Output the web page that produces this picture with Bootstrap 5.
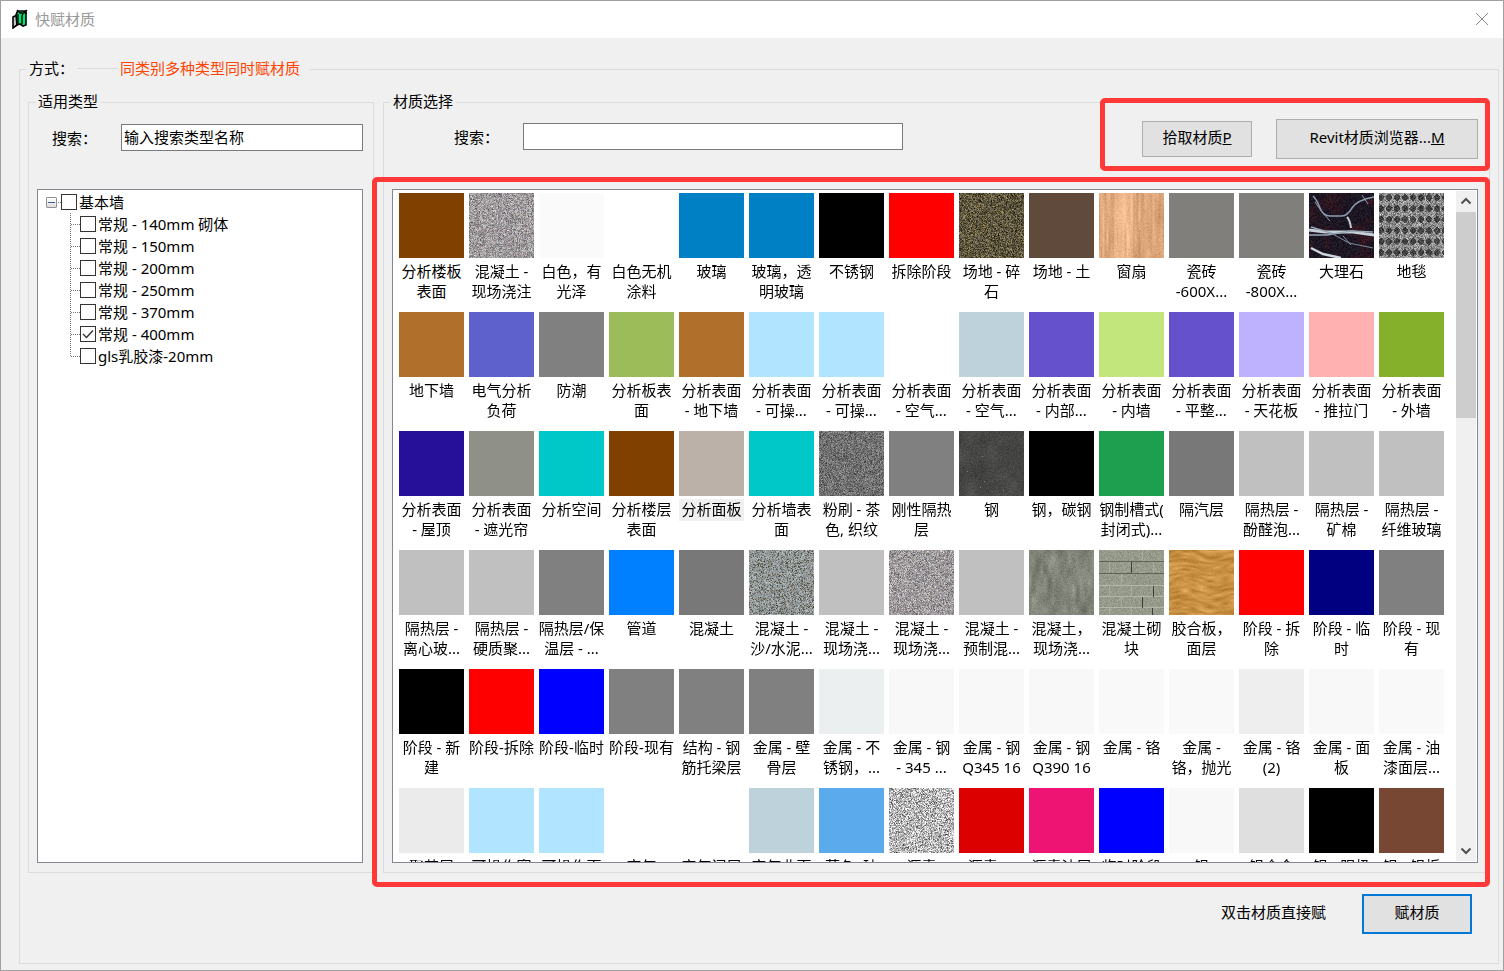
<!DOCTYPE html>
<html lang="zh-CN">
<head>
<meta charset="utf-8">
<meta name="viewport" content="width=device-width, initial-scale=1">
<title>快赋材质</title>
<link rel="stylesheet" href="https://cdn.jsdelivr.net/npm/bootstrap@5.3.0/dist/css/bootstrap.min.css">
<style>
  body { font: 15px/20px "Noto Sans", "Noto Sans CJK SC", sans-serif; color: #000; background: #f0f0f0; }
  .dialog { height: 100vh; min-height: 560px; border: 1px solid #a0a0a0; background: #f0f0f0; }
  .titlebar { height: 37px; padding: 0 14px 2px 10px; background: #fff; color: #999; }
  .titlebar h1 { font-size: 15px; line-height: 20px; font-weight: 400; margin: 0 auto 0 6px; }
  .close-x { width: 14px; height: 14px; background: none; }

  .workspace { padding: 20px 4px 6px 18px; min-height: 0; }
  .group { border: 1px solid #dcdcdc; min-width: 0; min-height: 0; }
  .group > legend { float: none; width: auto; font-size: 15px; line-height: 20px; margin: 0 0 0 -2px; padding: 0 3px 2px; }
  .group-main { padding: 11px 8px 29px; }
  .group-main > legend { padding-right: 9px; }
  .group-sub { padding: 0 11px 9px 8px; }
  .group-types { width: 346px; flex: none; padding-right: 10px; }
  .mode-rule { width: 41px; height: 1px; background: #dcdcdc; margin: 0 2px 0 3px; }
  .mode-note { color: #ff4500; }
  .columns { gap: 9px; min-height: 0; }

  .tool-row { height: 76px; flex: none; }
  .tool-row.types { padding: 11px 0 0 15px; }
  .tool-row.materials { padding: 6px 0 0 62px; }
  .search-label { width: 69px; flex: none; }
  .field { height: 27px; border: 1px solid #7a7a7a; background: #fff; padding: 0 2px 2px; border-radius: 0; outline: 0; min-width: 0; }
  .field-material { width: 380px; }

  .push { background: #e1e1e1; border: 1px solid #adadad; border-radius: 0; color: #000; padding: 0 0 4px; font-size: 15px; line-height: 20px; }
  .push:hover { background: #e5f1fb; border-color: #0078d7; }
  .push-pick { width: 110px; height: 36px; }
  .push-browser { width: 202px; height: 40px; }
  .push-apply { width: 110px; height: 40px; border: 2px solid #0078d7; }
  .push-gap { gap: 24px; }
  .hint { padding-bottom: 4px; }

  .callout { position: absolute; border: 5px solid #ff3838; border-radius: 5px; pointer-events: none; z-index: 2; }
  .callout-tools { inset: -21px -12px -12px -42px; }
  .callout-list { inset: -12px -12px -24px -20px; }

  .sunken { border: 1px solid #828790; background: #fff; min-height: 0; }
  .tree { padding: 1px 0 0 8px; overflow: hidden; }
  .tree ul { list-style: none; margin: 0; padding: 0; }
  .tree-row { height: 22px; display: flex; align-items: center; white-space: nowrap; }
  .tree-row label { padding-left: 2px; }
  .tree .branch { position: relative; margin-left: 24px; }
  .tree .branch::before { content: ""; position: absolute; left: 0; top: 0; bottom: 11px; border-left: 1px dotted #777; }
  .tree .branch .tree-row::before { content: ""; width: 9px; margin-left: 1px; border-top: 1px dotted #777; }
  .stem { width: 3px; margin-left: 1px; border-top: 1px dotted #777; }
  .expander { width: 11px; height: 11px; padding: 0; border: 1px solid #919191; border-radius: 1px; background: linear-gradient(#fff, #ddd); display: flex; align-items: center; justify-content: center; }
  .expander::before { content: ""; width: 7px; height: 1px; background: #3c5a9c; }
  .tick { appearance: none; width: 16px; height: 16px; margin: 0; border: 1px solid #333; background: #fff; border-radius: 0; flex: none; }
  .tick:checked { background: url("data:image/svg+xml,%3Csvg xmlns='http://www.w3.org/2000/svg' viewBox='0 0 14 14'%3E%3Cpath d='M2 7l3.500 3.500L12 3.500' fill='none' stroke='%23333' stroke-width='1.400'/%3E%3C/svg%3E") center/14px 14px no-repeat; }

  .swatches { list-style: none; margin: 0; padding: 3px 0 0 6px; display: grid; grid-template-columns: repeat(auto-fill, 65px); grid-auto-rows: 119px; column-gap: 5px; overflow: hidden; min-height: 0; align-content: start; }
  .swatches li { display: flex; flex-direction: column; align-items: center; }
  .chip { display: block; width: 65px; height: 65px; flex: none; }
  .caption-text { margin-top: 3px; padding: 0 2px 2px; text-align: center; white-space: nowrap; }
  .is-current .caption-text { background: #f0f0f0; }

  .scroller { width: 20px; margin: 1px; background: #f0f0f0; flex: none; }
  .scroller button { height: 20px; border: 0; padding: 0; background: #f0f0f0; display: flex; align-items: center; justify-content: center; }
  .thumb { height: 206px; margin-top: 1px; background: #cdcdcd; }
  .footer-row { padding: 21px 18px 0 0; gap: 36px; flex: none; }
</style>
</head>
<body>
<main class="dialog d-flex flex-column">
  <header class="titlebar d-flex align-items-center flex-shrink-0">
    <svg width="18" height="20" viewBox="0 0 18 20" aria-hidden="true">
      <path d="M2 8l4-2v10l-4 3z" fill="#c8c8c8" stroke="#000" stroke-width="1.600"/>
      <path d="M5 6l1-3 2-1h6l1 1v13l-3 1-3-2-3 1z" fill="#00e676" stroke="#000" stroke-width="1.600"/>
      <path d="M6 1l3 3h4l3-3M7 5v10M12 4l-1 3v8M15 1v4" stroke="#000" stroke-width="1.400" fill="none"/>
    </svg>
    <h1>快赋材质</h1>
    <button type="button" class="close-x border-0 p-0 d-flex" aria-label="关闭">
      <svg width="14" height="14" viewBox="0 0 14 14"><path d="M1 1l12 12M13 1L1 13" stroke="#8a8a8a" fill="none"/></svg>
    </button>
  </header>

  <div class="workspace flex-grow-1 d-flex">
    <fieldset class="group group-main flex-grow-1 d-flex flex-column">
      <legend><span class="d-flex align-items-center"><span>方式：</span><span class="mode-rule"></span><span class="mode-note">同类别多种类型同时赋材质</span></span></legend>

      <div class="columns d-flex flex-grow-1">
        <fieldset class="group group-sub group-types d-flex flex-column">
          <legend>适用类型</legend>
          <div class="tool-row types d-flex align-items-start">
            <label class="search-label pt-1" for="type-search">搜索：</label>
            <input class="field flex-grow-1" id="type-search" type="text" value="输入搜索类型名称">
          </div>
          <div class="sunken tree flex-grow-1">
            <ul>
              <li>
                <div class="tree-row"><button type="button" class="expander" aria-label="折叠"></button><span class="stem"></span><input class="tick" type="checkbox" id="t0"><label for="t0">基本墙</label></div>
                <ul class="branch">
                  <li class="tree-row"><input class="tick" type="checkbox" id="t1"><label for="t1">常规 - 140mm 砌体</label></li>
                  <li class="tree-row"><input class="tick" type="checkbox" id="t2"><label for="t2">常规 - 150mm</label></li>
                  <li class="tree-row"><input class="tick" type="checkbox" id="t3"><label for="t3">常规 - 200mm</label></li>
                  <li class="tree-row"><input class="tick" type="checkbox" id="t4"><label for="t4">常规 - 250mm</label></li>
                  <li class="tree-row"><input class="tick" type="checkbox" id="t5"><label for="t5">常规 - 370mm</label></li>
                  <li class="tree-row"><input class="tick" type="checkbox" id="t6" checked><label for="t6">常规 - 400mm</label></li>
                  <li class="tree-row"><input class="tick" type="checkbox" id="t7"><label for="t7">gls乳胶漆-20mm</label></li>
                </ul>
              </li>
            </ul>
          </div>
        </fieldset>

        <fieldset class="group group-sub flex-grow-1 d-flex flex-column">
          <legend>材质选择</legend>
          <div class="tool-row materials d-flex align-items-start">
            <div class="d-flex me-auto pt-1">
              <label class="search-label pt-1" for="material-search">搜索：</label>
              <input class="field field-material" id="material-search" type="text">
            </div>
            <div class="push-gap position-relative d-flex align-items-center">
              <button type="button" class="btn push push-pick">拾取材质<u>P</u></button>
              <button type="button" class="btn push push-browser">Revit材质浏览器...<u>M</u></button>
              <div class="callout callout-tools"></div>
            </div>
          </div>
          <div class="sunken position-relative flex-grow-1 d-flex border-0">
            <div class="sunken flex-grow-1 d-flex">
              <ul class="swatches flex-grow-1" id="swatches"></ul>
              <div class="scroller d-flex flex-column">
                <button type="button" aria-label="向上滚动"><svg width="12" height="8" viewBox="0 0 12 8"><path d="M1.500 6.500L6 2l4.500 4.500" fill="none" stroke="#505050" stroke-width="2"/></svg></button>
                <div class="thumb"></div>
                <button type="button" class="mt-auto" aria-label="向下滚动"><svg width="12" height="8" viewBox="0 0 12 8"><path d="M1.500 1.500L6 6l4.500-4.500" fill="none" stroke="#505050" stroke-width="2"/></svg></button>
              </div>
            </div>
            <div class="callout callout-list"></div>
          </div>
        </fieldset>
      </div>

      <div class="footer-row d-flex justify-content-end align-items-center">
        <span class="hint">双击材质直接赋</span>
        <button type="button" class="btn push push-apply">赋材质</button>
      </div>
    </fieldset>
  </div>
</main>

<script src="https://cdn.jsdelivr.net/npm/bootstrap@5.3.0/dist/js/bootstrap.bundle.min.js"></script>
<script>
  // Each material: caption (| separates lines) and either a colour or a texture name.
  const materials = [
    ['分析楼板|表面', '#804000'], ['混凝土 -|现场浇注', 'castConcrete'], ['白色，有|光泽', '#fafafa'], ['白色无机|涂料', '#ffffff'], ['玻璃', '#0080c4'],
    ['玻璃，透|明玻璃', '#0080c4'], ['不锈钢', '#000000'], ['拆除阶段', '#ff0000'], ['场地 - 碎|石', 'gravel'], ['场地 - 土', '#604a3c'],
    ['窗扇', 'pine'], ['瓷砖|-600X...', '#807f7c'], ['瓷砖|-800X...', '#807f7c'], ['大理石', 'marble'], ['地毯', 'carpet'],

    ['地下墙', '#b06f2a'], ['电气分析|负荷', '#5e60cc'], ['防潮', '#808080'], ['分析板表|面', '#9cbb59'], ['分析表面|- 地下墙', '#b06f2a'],
    ['分析表面|- 可操...', '#b1e5ff'], ['分析表面|- 可操...', '#b1e5ff'], ['分析表面|- 空气...', '#ffffff'], ['分析表面|- 空气...', '#bdd2db'], ['分析表面|- 内部...', '#6551cb'],
    ['分析表面|- 内墙', '#c2e57c'], ['分析表面|- 平整...', '#6551cb'], ['分析表面|- 天花板', '#beb2ff'], ['分析表面|- 推拉门', '#ffb0b0'], ['分析表面|- 外墙', '#84b02c'],

    ['分析表面|- 屋顶', '#261099'], ['分析表面|- 遮光帘', '#8f9087'], ['分析空间', '#00c8c8'], ['分析楼层|表面', '#804000'], ['分析面板', '#bcb1a9'],
    ['分析墙表|面', '#00c8c8'], ['粉刷 - 茶|色, 织纹', 'plaster'], ['刚性隔热|层', '#808080'], ['钢', 'steel'], ['钢，碳钢', '#000000'],
    ['钢制槽式(|封闭式)...', '#1e9e4f'], ['隔汽层', '#787878'], ['隔热层 -|酚醛泡...', '#c0c0c0'], ['隔热层 -|矿棉', '#c0c0c0'], ['隔热层 -|纤维玻璃', '#c0c0c0'],

    ['隔热层 -|离心玻...', '#c0c0c0'], ['隔热层 -|硬质聚...', '#c0c0c0'], ['隔热层/保|温层 - ...', '#808080'], ['管道', '#0080ff'], ['混凝土', '#787878'],
    ['混凝土 -|沙/水泥...', 'screed'], ['混凝土 -|现场浇...', '#c0c0c0'], ['混凝土 -|现场浇...', 'castConcrete'], ['混凝土 -|预制混...', '#c0c0c0'], ['混凝土，|现场浇...', 'rawConcrete'],
    ['混凝土砌|块', 'blocks'], ['胶合板，|面层', 'plywood'], ['阶段 - 拆|除', '#ff0000'], ['阶段 - 临|时', '#000080'], ['阶段 - 现|有', '#808080'],

    ['阶段 - 新|建', '#000000'], ['阶段-拆除', '#ff0000'], ['阶段-临时', '#0000ff'], ['阶段-现有', '#808080'], ['结构 - 钢|筋托梁层', '#808080'],
    ['金属 - 壁|骨层', '#808080'], ['金属 - 不|锈钢，...', '#ebeff0'], ['金属 - 钢|- 345 ...', '#f8f8f8'], ['金属 - 钢|Q345 16', '#f8f8f8'], ['金属 - 钢|Q390 16', '#f8f8f8'],
    ['金属 - 铬', '#f9f9f9'], ['金属 -|铬，抛光', '#f9f9f9'], ['金属 - 铬|(2)', '#eeeeee'], ['金属 - 面|板', '#f8f8f8'], ['金属 - 油|漆面层...', '#f9f9f9'],

    ['聚苯层', '#ebebeb'], ['可操作窗', '#b1e5ff'], ['可操作面', '#b1e5ff'], ['空气', '#ffffff'], ['空气间层', '#ffffff'],
    ['空气曲面', '#bdd2db'], ['蓝色, 玻', '#5aaaec'], ['沥青', 'asphalt'], ['沥青(1)', '#dc0000'], ['沥青油层', '#ed1474'],
    ['临时阶段', '#0000ff'], ['铝', '#f8f8f8'], ['铝合金', '#dfdfdf'], ['铝 - 阳极', '#000000'], ['铝 - 铝板', '#774733']
  ];

  let seed = 7;
  const rnd = () => (seed = (seed * 1664525 + 1013904223) >>> 0) / 4294967296;
  const spread = () => rnd() + rnd() + rnd() - 1.5;

  // Fills a 65 x 65 canvas from a function that gives the colour of each pixel.
  function grain(g, pixel) {
    const image = g.createImageData(65, 65);
    for (let y = 0, i = 0; y < 65; y++) for (let x = 0; x < 65; x++, i += 4) {
      const [r, gr, b] = pixel(x, y);
      image.data[i] = r; image.data[i + 1] = gr; image.data[i + 2] = b; image.data[i + 3] = 255;
    }
    g.putImageData(image, 0, 0);
  }
  const noisy = (base, amount, tint = 0) => () => {
    const n = spread() * amount;
    return base.map(c => c + n + spread() * tint);
  };
  // Smooth random field: values on a coarse lattice, blended between its points.
  function cloud(stepX, stepY) {
    const cells = Array.from({ length: 70 * 70 }, spread);
    return (x, y) => {
      const u = x / stepX, v = y / stepY, i = Math.floor(u), j = Math.floor(v), a = u - i, b = v - j;
      const at = (p, q) => cells[q * 70 + p];
      return (at(i, j) * (1 - a) + at(i + 1, j) * a) * (1 - b) + (at(i, j + 1) * (1 - a) + at(i + 1, j + 1) * a) * b;
    };
  }
  function curve(g, d, colour, width) {
    g.strokeStyle = colour; g.lineWidth = width; g.stroke(new Path2D(d));
  }

  const textures = {
    castConcrete: g => grain(g, noisy([158, 154, 156], 56, 9)),
    gravel: g => grain(g, () => {
      if (rnd() < .06) return [165, 138, 78];
      const n = spread() * 54; return [90 + n, 84 + n, 62 + n];
    }),
    pine: g => {
      const streak = cloud(2, 22);
      grain(g, (x, y) => { const n = streak(x, y) * 20 + spread() * 10 + (x > 14 && x < 34 ? 12 : -2); return [224 + n, 170 + n, 126 + n]; });
    },
    marble: g => {
      const blot = cloud(9, 9);
      grain(g, (x, y) => {
        const red = Math.max(0, blot(x, y)), n = spread() * 14;
        return [28 + red * 40 + n, 22 + n, 34 - red * 4 + n];
      });
      curve(g, 'M4 3q4 4 7 12t10 8 12 0 10-8 22-11', '#8c9cae', 1.5);
      curve(g, 'M6 9l7 10 8 9M53 2l6 9', '#8c9cae', 1);
      curve(g, 'M38 24q3 3 4 11', '#c0ccd6', 2);
      curve(g, 'M0 37l16 2 12 0 16 0 21 3', '#c5d0d8', 3);
      curve(g, 'M0 42l18 0 24-4 22 1M2 34l20 6', '#98a7b6', 1.5);
      curve(g, 'M22 40l18 10 24 5M34 43l8 9', '#7d8b9b', 1);
      curve(g, 'M2 55l12 6 18 4', '#cad5dd', 2.5);
    },
    carpet: g => grain(g, (x, y) => {
      const dx = (x + 2) % 8 - 3.5, dy = (y + 1) % 11 - 5, n = spread() * 62;
      const dark = dx * dx + dy * dy < 10 ? 75 : 0;
      const v = 140 - dark + n * (dark ? .5 : 1); return [v, v, v];
    }),
    plaster: g => grain(g, noisy([112, 112, 112], 46)),
    steel: g => {
      const blot = cloud(11, 9);
      grain(g, (x, y) => { const n = spread() * 11 + blot(x, y) * 10; return [70 + n, 71 + n, 68 + n]; });
      for (const [x, y] of [[23, 25], [8, 40], [25, 50], [21, 56], [44, 59]]) { g.fillStyle = '#8d8150'; g.fillRect(x, y, 1, 1); }
    },
    screed: g => grain(g, () => {
      const n = spread() * 38;
      return rnd() < .2 ? [102 + n, 97 + n, 82 + n] : [148 + n, 156 + n, 157 + n];
    }),
    rawConcrete: g => {
      const streak = cloud(4, 10);
      grain(g, (x, y) => { const n = streak(x, y) * 20 + spread() * 12; return [128 + n, 132 + n, 120 + n]; });
    },
    blocks: g => {
      grain(g, noisy([150, 154, 138], 16));
      for (const y of [11, 23, 35, 46, 57]) {
        g.fillStyle = y < 30 ? '#5f6459' : '#b2b7a7'; g.fillRect(0, y, 65, 1);
      }
      g.fillStyle = '#a9ae9d';
      for (const [x, y] of [[43, 0], [10, 12], [54, 12], [22, 24], [10, 36], [32, 36], [22, 47], [10, 58], [32, 58]]) g.fillRect(x, y, 1, 11);
      g.fillStyle = '#3c413b';
      for (const [x, y] of [[32, 12], [54, 36], [43, 47], [53, 58]]) g.fillRect(x, y, 1, 11);
    },
    plywood: g => {
      const fibre = cloud(8, 2);
      grain(g, (x, y) => {
        const n = fibre(x, y + Math.sin(x / 9) * 2 + 3) * 26 + spread() * 5;
        return [201 + n, 145 + n, 68 + n];
      });
    },
    asphalt: g => grain(g, noisy([184, 184, 184], 92))
  };

  const list = document.getElementById('swatches');
  for (const [caption, fill] of materials) {
    const item = document.createElement('li');
    let chip;
    if (textures[fill]) {
      chip = document.createElement('canvas');
      chip.width = chip.height = 65;
      textures[fill](chip.getContext('2d'));
    } else {
      chip = document.createElement('span');
      chip.style.backgroundColor = fill;
    }
    chip.className = 'chip';
    const text = document.createElement('span');
    text.className = 'caption-text';
    caption.split('|').forEach((line, i) => {
      if (i) text.append(document.createElement('br'));
      text.append(line);
    });
    if (caption === '分析面板') item.className = 'is-current';
    item.append(chip, text);
    list.append(item);
  }
</script>
</body>
</html>
